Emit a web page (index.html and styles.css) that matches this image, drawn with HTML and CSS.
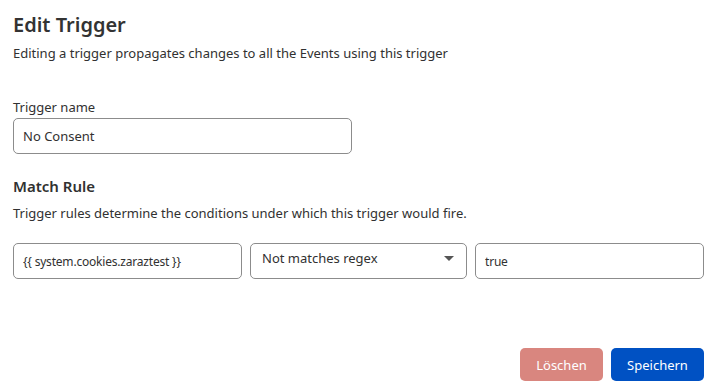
FILE: index.html
```html
<!DOCTYPE html>
<html lang="en">
<head>
    <meta charset="UTF-8">
    <title>Edit Trigger</title>
    <link rel="stylesheet" href="styles.css">
</head>
<body>
    <div class="dialog">
        <!-- Header -->
        <h2 class="title">Edit Trigger</h2>
        <p class="subtitle">Editing a trigger propagates changes to all the Events using this trigger</p>

        <!-- Trigger name -->
        <label class="field-label" for="trigger_name">Trigger name</label>
        <input class="text-input name-input" type="text" id="trigger_name" value="No Consent">

        <!-- Match rule -->
        <h3 class="section-title">Match Rule</h3>
        <p class="section-desc">Trigger rules determine the conditions under which this trigger would fire.</p>

        <div class="rule-row">
            <input class="text-input rule-input small" type="text" value="{{ system.cookies.zaraztest }}">
            <div class="select-box">
                <span>Not matches regex</span>
                <span class="caret"></span>
            </div>
            <input class="text-input rule-input small" type="text" value="true">
        </div>

        <!-- Buttons -->
        <div class="actions">
            <button class="btn btn-delete">Löschen</button>
            <button class="btn btn-save">Speichern</button>
        </div>
    </div>
</body>
</html>
```

FILE: styles.css
```css
/* General */
body {
    margin: 0;
    background-color: white;
    color: #313131;
    font-family: "Noto Sans", "Open Sans", sans-serif;
}

.dialog {
    padding: 11px 14px 11px 13px;
    display: flex;
    flex-direction: column;
}

/* Header */
.title {
    margin: 0;
    font-size: 20px;
    font-weight: 600;
    line-height: 28px;
    color: #333;
}

.subtitle {
    margin: 5px 0 0 0;
    font-size: 13px;
    line-height: 18px;
}

/* Trigger name */
.field-label {
    margin-top: 36px;
    font-size: 13px;
    line-height: 18px;
}

.text-input {
    box-sizing: border-box;
    height: 36px;
    border: 1px solid #8c8c8c;
    border-radius: 5px;
    padding: 0 9px;
    font-family: inherit;
    font-size: 13px;
    color: #313131;
    background-color: white;
}

.name-input {
    width: 339px;
    margin-top: 2px;
}

/* Match rule */
.section-title {
    margin: 22px 0 0 0;
    font-size: 15px;
    font-weight: 600;
    line-height: 20px;
}

.section-desc {
    margin: 8px 0 0 0;
    font-size: 13px;
    line-height: 18px;
}

.rule-row {
    display: flex;
    gap: 8px;
    margin-top: 21px;
}

.rule-input {
    width: 229px;
}

.small {
    font-size: 12px;
    letter-spacing: -0.2px;
}

.select-box {
    box-sizing: border-box;
    width: 217px;
    height: 36px;
    border: 1px solid #8c8c8c;
    border-radius: 5px;
    padding: 0 12px 6px 11px;
    display: flex;
    align-items: center;
    justify-content: space-between;
    font-size: 13px;
}

.caret {
    width: 0;
    height: 0;
    border-left: 5px solid transparent;
    border-right: 5px solid transparent;
    border-top: 5px solid #555;
}

/* Buttons */
.actions {
    display: flex;
    justify-content: flex-end;
    gap: 8px;
    margin-top: 69px;
}

.btn {
    height: 33px;
    border: none;
    border-radius: 5px;
    padding: 0 16px;
    font-family: inherit;
    font-size: 13px;
    color: white;
}

.btn-delete {
    background-color: #d9867f;
    width: 83px;
}

.btn-save {
    background-color: #0051c3;
    width: 93px;
}
```
